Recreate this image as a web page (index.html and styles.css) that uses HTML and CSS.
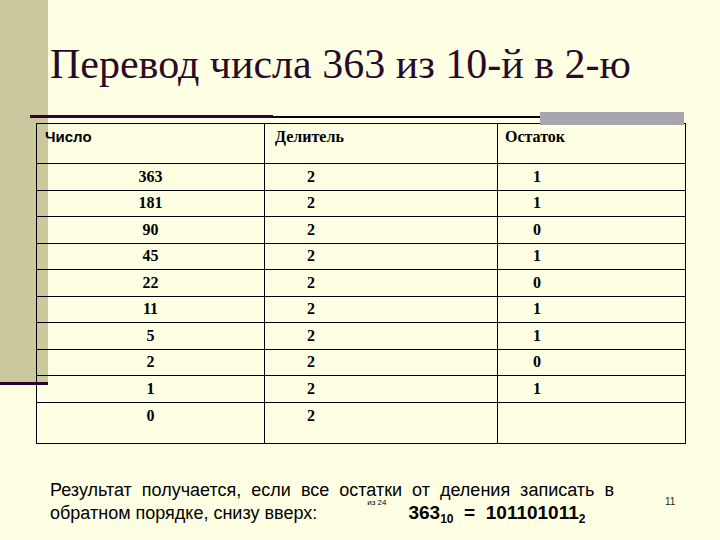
FILE: index.html
```html
<!DOCTYPE html>
<html lang="ru">
<head>
<meta charset="utf-8">
<title>Перевод числа 363 из 10-й в 2-ю</title>
<link rel="stylesheet" href="styles.css">
</head>
<body>
<div class="slide">
  <h1 class="title">Перевод числа 363 из 10-й в 2-ю</h1>
  <div class="rules">
    <div class="rule-purple"></div>
    <div class="rule-black"></div>
    <div class="rule-gray"></div>
  </div>
  <table class="grid">
    <colgroup>
      <col class="c1"><col class="c2"><col class="c3">
    </colgroup>
    <tr class="head">
      <th class="h1">Число</th>
      <th class="h2">Делитель</th>
      <th class="h3">Остаток</th>
    </tr>
    <tr><td class="n">363</td><td class="d">2</td><td class="r">1</td></tr>
    <tr><td class="n">181</td><td class="d">2</td><td class="r">1</td></tr>
    <tr><td class="n">90</td><td class="d">2</td><td class="r">0</td></tr>
    <tr><td class="n">45</td><td class="d">2</td><td class="r">1</td></tr>
    <tr><td class="n">22</td><td class="d">2</td><td class="r">0</td></tr>
    <tr><td class="n">11</td><td class="d">2</td><td class="r">1</td></tr>
    <tr><td class="n">5</td><td class="d">2</td><td class="r">1</td></tr>
    <tr><td class="n">2</td><td class="d">2</td><td class="r">0</td></tr>
    <tr><td class="n">1</td><td class="d">2</td><td class="r">1</td></tr>
    <tr class="last"><td class="n">0</td><td class="d">2</td><td class="r"></td></tr>
  </table>
  <div class="footer">
    <p class="note">Результат получается, если все остатки от деления записать в обратном порядке, снизу вверх:<span class="of">из 24</span><span class="result">363<span class="sub">10</span>&nbsp; =&nbsp; 101101011<span class="sub">2</span></span></p>
    <div class="pagenum">11</div>
  </div>
</div>
</body>
</html>
```

FILE: styles.css
```css
html, body {
  margin: 0;
  padding: 0;
}
body {
  background: #ffffe3;
}
.slide {
  width: 720px;
  height: 540px;
  overflow: hidden;
  background:
    linear-gradient(#330033, #330033) 0 382px / 48px 3px no-repeat,
    linear-gradient(#c9c99d, #c9c99d) 0 0 / 48px 382px no-repeat,
    #ffffe3;
}
.title {
  margin: 0;
  height: 72px;
  padding: 40px 0 0 50px;
  box-sizing: content-box;
  font-family: "Liberation Serif", "Times New Roman", serif;
  font-weight: normal;
  font-size: 42px;
  line-height: 48px;
  color: #2a0a2a;
  white-space: nowrap;
}
.rules {
  display: flex;
  height: 11px;
  padding-left: 30px;
}
.rule-purple {
  width: 243px;
  height: 3px;
  margin-top: 3px;
  background: #330033;
}
.rule-black {
  width: 267px;
  height: 2px;
  margin-top: 4px;
  background: #000;
}
.rule-gray {
  position: relative;
  z-index: 1;
  width: 144px;
  height: 13px;
  background: #a9a5af;
}
.grid {
  margin-left: 36px;
  border-collapse: collapse;
  table-layout: fixed;
  width: 649px;
}
.c1 { width: 228px; }
.c2 { width: 233px; }
.c3 { width: 188px; }
.grid th, .grid td {
  border: 1px solid #000;
  padding: 0;
  font-family: "Liberation Serif", "Times New Roman", serif;
  font-weight: bold;
  font-size: 16px;
  line-height: 18px;
  color: #000;
  text-align: left;
}
.grid .head th {
  height: 40px;
  vertical-align: top;
  padding-top: 4px;
  box-sizing: border-box;
}
.grid th.h1 {
  font-family: "Liberation Sans", Arial, sans-serif;
  font-size: 15px;
  padding-left: 8px;
}
.grid th.h2 { padding-left: 10px; }
.grid th.h3 { padding-left: 7px; }
.grid tr td {
  height: 26.5px;
  box-sizing: border-box;
  vertical-align: middle;
}
.grid td.n { text-align: center; }
.grid td.d { padding-left: 42px; }
.grid td.r { padding-left: 35px; }
.grid tr.last td {
  height: 41px;
  vertical-align: top;
  padding-top: 4px;
}
.footer {
  display: flex;
  align-items: flex-start;
  margin-top: 35px;
}
.note {
  margin: 0 0 0 50px;
  width: 564px;
  font-family: "Liberation Sans", Arial, sans-serif;
  font-size: 18px;
  line-height: 23px;
  text-align: justify;
  color: #000;
}
.of {
  margin-left: 50px;
  font-size: 8px;
  line-height: 0;
  vertical-align: 14px;
}
.result {
  margin-left: 22px;
  font-size: 19px;
  line-height: 20px;
  font-weight: bold;
}
.result .sub {
  font-size: 12px;
  line-height: 0;
  vertical-align: -4px;
}
.pagenum {
  margin-left: 51px;
  padding-top: 17px;
  font-family: "Liberation Sans", Arial, sans-serif;
  font-size: 10px;
  line-height: 12px;
  color: #222;
}
```
